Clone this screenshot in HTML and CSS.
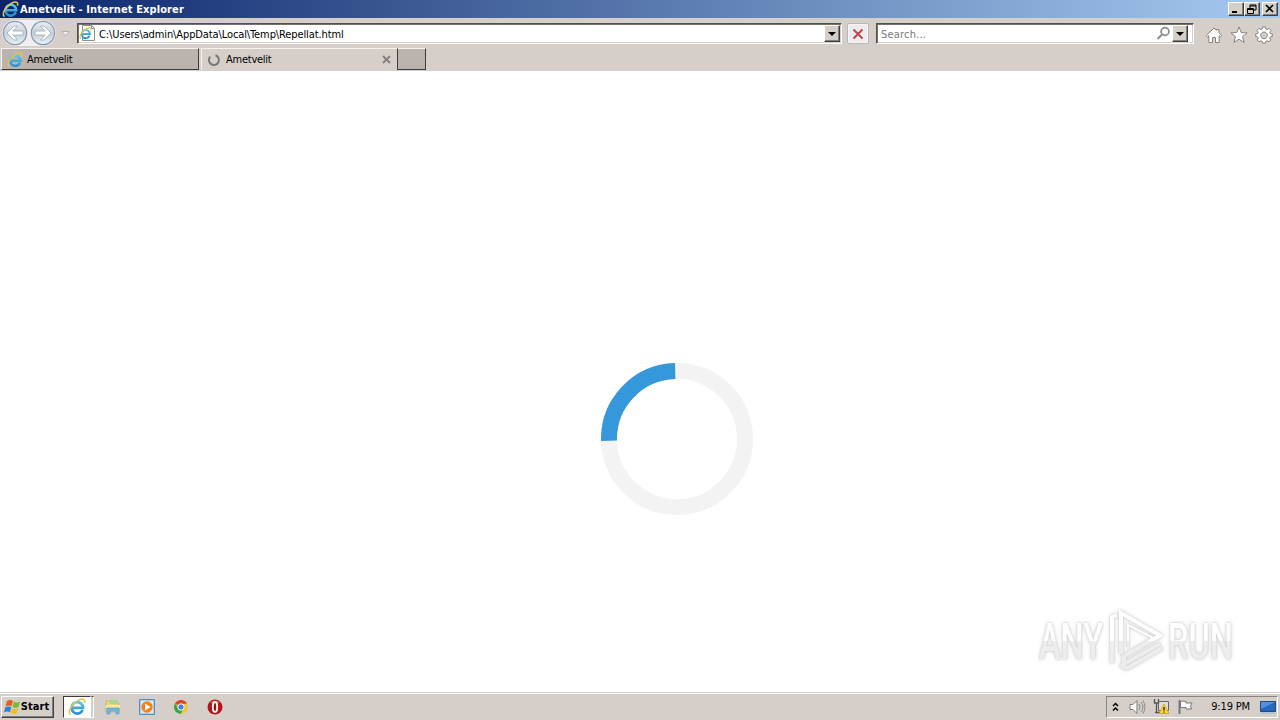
FILE: index.html
```html
<!DOCTYPE html>
<html lang="en">
<head>
  <meta charset="UTF-8" />
  <title>Ametvelit - Internet Explorer</title>
  <link rel="stylesheet" href="styles.css">
</head>
<body>
  <!-- shared icon shapes -->
  <svg class="defs" width="0" height="0">
    <defs>
      <linearGradient id="ie-blue" x1="0" y1="0" x2="0" y2="1">
        <stop offset="0" stop-color="#56c5ef" /><stop offset="1" stop-color="#2e8ed0" />
      </linearGradient>
      <linearGradient id="round" x1="0" y1="0" x2="0" y2="1">
        <stop offset="0" stop-color="#eef0f3" /><stop offset=".5" stop-color="#c5ced8" /><stop offset="1" stop-color="#e7f3fa" />
      </linearGradient>
      <symbol id="ie" viewBox="0 0 16 16">
        <path d="M13 10.7A5.1 5.1 0 1 1 13.4 8.7H4.3" fill="none" stroke="url(#ie-blue)" stroke-width="2.4" />
        <path d="M2.4 14.7C-.8 12.6 3.1 5.2 9 2.1C12.5.2 15.8.7 14.5 4.4" fill="none" stroke="#e9c545" stroke-width="1.4" />
      </symbol>
    </defs>
  </svg>

  <header class="titlebar">
    <svg class="ie-icon" width="17" height="17"><use href="#ie" /></svg>
    <h1>Ametvelit - Internet Explorer</h1>
    <div class="window-buttons">
      <button><svg width="12" height="10"><path d="M2 8h5" stroke="#000" stroke-width="2" /></svg></button>
      <button><svg width="12" height="10"><path d="M4 4V1h6v5H8M4 2h6M1.5 4.5h6v5h-6zM1 5.5h7" fill="none" stroke="#000" /></svg></button>
      <button class="close"><svg width="12" height="10"><path d="M2 1l7 7M9 1L2 8" stroke="#000" stroke-width="1.7" /></svg></button>
    </div>
  </header>

  <nav class="navbar">
    <svg class="history" width="74" height="28" viewBox="0 0 74 28">
      <path d="M15 1H43a13 13 0 0 1 0 26H15a13 13 0 0 1 0-26z" fill="#f0efef" />
      <circle cx="15" cy="14" r="11.7" fill="url(#round)" stroke="#8799aa" stroke-width="1.2" />
      <circle cx="43" cy="14" r="11.7" fill="url(#round)" stroke="#8799aa" stroke-width="1.2" />
      <g fill="#fff" stroke="#9eabb9" stroke-width=".8">
        <path d="M7 14l7-7h3.500l-4.700 5H23v4H12.800l4.700 5H14z" />
        <path d="M51 14l-7-7h-3.500l4.700 5H35v4h10.200l-4.700 5H44z" />
      </g>
      <path d="M61.500 12.500h8l-4 4z" fill="#eee" stroke="#b4aea8" />
    </svg>
    <div class="field address">
      <svg width="17" height="17" viewBox="0 0 17 17">
        <path d="M3.500.5h9l3 3v12h-12z" fill="#fff" stroke="#8e8e8e" /><path d="M12.500.5v3h3" fill="none" stroke="#8e8e8e" />
        <use href="#ie" x="0" y="2" width="13" height="13" />
      </svg>
      <span class="url">C:\Users\admin\AppData\Local\Temp\Repellat.html</span>
      <button class="drop"><svg width="8" height="4"><path d="M0 0h8L4 4z" /></svg></button>
    </div>
    <button class="stop"><svg width="12" height="12"><path d="M1.500 1.500l9 9M10.500 1.500l-9 9" stroke="#b9474b" stroke-width="2" /></svg></button>
    <div class="field search">
      <span class="hint">Search...</span>
      <svg width="15" height="15" viewBox="0 0 15 15"><circle cx="9" cy="5.500" r="3.900" fill="none" stroke="#8b8b8b" stroke-width="1.700" /><path d="M6.300 8.300L1.500 13" stroke="#8b8b8b" stroke-width="2" /></svg>
      <button class="drop"><svg width="8" height="4"><path d="M0 0h8L4 4z" /></svg></button>
    </div>
    <div class="tools">
      <svg width="18" height="18" viewBox="0 0 18 18"><path d="M9 2l2.500 2.400V3.500h2.500v3.300l2.800 2.800-1.300 1.200-1.300-1.200V16.500h-3.700v-5h-3v5H3.800V9.600l-1.300 1.200-1.300-1.200z" /></svg>
      <svg width="18" height="18" viewBox="0 0 18 18"><path d="M9 1l2.200 5.500 5.900.4-4.600 3.700 1.600 5.900L9 13.200l-5.100 3.300 1.600-5.900L.9 6.900l5.900-.4z" /></svg>
      <svg width="18" height="18" viewBox="0 0 18 18"><path fill-rule="evenodd" d="M7.500 1h3l.4 2.100 1.300.5L14 2.400 16 4.500l-1.300 1.800.5 1.200 2.100.4v2.700l-2.100.4-.5 1.300L16 14l-2 2-1.800-1.200-1.300.5-.4 2h-3l-.4-2-1.300-.5L4 16l-2-2 1.300-1.700-.5-1.300-2.100-.4V7.900l2.100-.4.5-1.200L2 4.500 4 2.400l1.800 1.200 1.300-.5zM9 6a3.300 3.300 0 1 0 .01 0z" /></svg>
    </div>
  </nav>

  <div class="tabs">
    <div class="tab">
      <svg width="16" height="16"><use href="#ie" /></svg>
      <span>Ametvelit</span>
    </div>
    <div class="tab active">
      <svg width="16" height="16" viewBox="0 0 16 16"><path d="M9.500 3.300A5 5 0 1 1 4.200 4.700" fill="none" stroke="#777" stroke-width="2" /></svg>
      <span>Ametvelit</span>
      <svg class="tab-close" width="9" height="9"><path d="M1 1l7 7M8 1L1 8" stroke="#858080" stroke-width="2" /></svg>
    </div>
    <div class="tab new"></div>
  </div>

  <main class="page">
    <svg class="loader" width="153" height="152" viewBox="0 0 153 152">
      <circle cx="76" cy="76" r="68" fill="none" stroke="#f3f3f3" stroke-width="16" />
      <path d="M8.020 77.780A68 68 0 0 1 74.220 8.020" fill="none" stroke="#3498db" stroke-width="16" />
    </svg>
    <svg class="watermark" width="210" height="76" viewBox="0 0 210 76">
      <defs>
        <linearGradient id="mark" gradientUnits="userSpaceOnUse" x1="0" y1="0" x2="0" y2="76">
          <stop offset=".48" stop-color="#fff" /><stop offset=".48" stop-color="#ededed" />
        </linearGradient>
      </defs>
      <g class="wordmark" fill="url(#mark)">
        <text x="9" y="54" textLength="64" lengthAdjust="spacingAndGlyphs">ANY</text>
        <text x="138" y="54" textLength="65" lengthAdjust="spacingAndGlyphs">RUN</text>
      </g>
      <g class="play" fill="none" stroke="url(#mark)" stroke-width="4">
        <path d="M82 58V12l5-2" />
        <path d="M91 49V8l39 22.500-36 20.500v8l36-20" />
        <path d="M98 43V20l27 14" stroke-width="2" />
        <path d="M90 60l7 3 35-20" />
      </g>
    </svg>
  </main>

  <footer class="taskbar">
    <button class="start">
      <svg width="17" height="16" viewBox="0 0 17 16">
        <path d="M3 2q3-2 6 0L7.500 7.300q-3-1.700-6 0z" fill="#e65b24" /><path d="M10 2.500q3 1.800 6 0L14.500 8q-3 1.600-6 0z" fill="#75b936" />
        <path d="M1.300 8.300q3-1.700 6 0L6 13.300q-3-1.700-6 0z" fill="#2786d0" /><path d="M8.200 9q3 1.700 6 0L13 14q-3 1.800-6 0z" fill="#f5bd25" />
      </svg>
      Start
    </button>
    <div class="running"><svg width="18" height="18"><use href="#ie" /></svg></div>
    <div class="stack"></div>
    <div class="pinned">
      <svg width="16" height="16" viewBox="0 0 16 16"><path d="M1 2h5l1 2h7v9H1z" fill="#ecd57a" stroke="#c9ad55" stroke-width=".7" /><path d="M5 1h8v4H5z" fill="#a8d590" /><path d="M1 6h14v3H1z" fill="#f6e8a8" /><path d="M2 15V9h12v6h-3v-3H5v3z" fill="#71b9df" stroke="#4a98c4" stroke-width=".6" /></svg>
      <svg width="16" height="16" viewBox="0 0 16 16"><path d="M.5.5h15v15H.5z" fill="#a9cfea" stroke="#4d8fbd" /><path d="M2 2h12v12H2z" fill="#d8e9f4" /><circle cx="8" cy="8" r="5.700" fill="#ef8518" /><path d="M6 4.500v7L11.500 8z" fill="#fff" /></svg>
      <svg width="16" height="16" viewBox="0 0 16 16"><circle cx="8" cy="8" r="7" fill="#f4c52c" /><path d="M8 8L2 4.400A7 7 0 0 1 14 4.500L8 5z" fill="#df4132" /><path d="M2 4.400A7 7 0 0 0 7.500 15l3.200-5.500L8 8 5.500 9.400z" fill="#36a453" /><circle cx="8" cy="8" r="3.200" fill="#3d83df" stroke="#fff" /></svg>
      <svg width="16" height="16" viewBox="0 0 16 16"><circle cx="8" cy="8" r="7.500" fill="#b91116" /><path d="M3 3.500a7 7 0 0 1 10 0Q8 6 3 3.500z" fill="#db5550" /><ellipse cx="8" cy="8" rx="2.200" ry="5" fill="#a01014" stroke="#fff" stroke-width="1.900" /></svg>
    </div>
    <div class="tray">
      <svg width="7" height="10" viewBox="0 0 7 10"><path d="M1 4l2.500-2.500L6 4M1 8.500L3.500 6 6 8.500" fill="none" stroke="#000" stroke-width="1.500" /></svg>
      <svg class="volume" width="17" height="16" viewBox="0 0 17 16"><path d="M1 5.500h3l4-4v13l-4-4H1z" fill="#fff" stroke="#777" /><path d="M10 5q2 3 0 6M12 3q4 5 0 10M14 1.500q4 6.500 0 13" fill="none" stroke="#888" /></svg>
      <svg class="network" width="17" height="17" viewBox="0 0 17 17"><path d="M5.500 3.500h10v9h-10z" fill="#ddd" stroke="#666" /><path d="M1.500 1v4h4V1M3.500 5v9M2 14.500h5" fill="none" stroke="#555" stroke-width="1.300" /><path d="M11 6l5 9.500H6z" fill="#ffd52c" stroke="#c79b0b" stroke-width=".7" /><path d="M11 9v3.500M11 13.400v1.200" stroke="#222" stroke-width="1.300" /></svg>
      <svg class="flag" width="17" height="16" viewBox="0 0 17 16"><path d="M2.500 1v14" stroke="#777" stroke-width="2" /><path d="M3.500 2.500q3-1 5.500 0v1.500h6l-1.500 3 1 3H9V8.500H3.500z" fill="#fff" stroke="#777" /></svg>
      <time>9:19 PM</time>
      <svg width="16" height="14" viewBox="0 0 16 14"><path d="M.5 1.500h15v10H.5z" fill="#2368bd" stroke="#234b78" /><path d="M1 2h14L1 9z" fill="#4e91dd" /><path d="M1 13h14" stroke="#a9bdd1" stroke-width="1.500" /></svg>
    </div>
  </footer>
</body>
</html>
```
FILE: styles.css
```css
* {
  box-sizing: border-box;
}

body {
  margin: 0;
  height: 100vh;
  display: flex;
  flex-direction: column;
  overflow: hidden;
  background: #fff;
  color: #000;
  font-family: "DejaVu Sans Condensed", "DejaVu Sans", sans-serif;
  font-stretch: condensed;
  font-size: 11px;
}

svg {
  display: block;
  flex: none;
}

.defs {
  position: absolute;
}

button {
  display: flex;
  align-items: center;
  justify-content: center;
  padding: 0;
  font: inherit;
  color: #000;
  background: #d4d0c8;
  border: 1px solid;
  border-color: #fff #404040 #404040 #fff;
  box-shadow: inset -1px -1px #808080;
}

.titlebar {
  flex: none;
  height: 18px;
  display: flex;
  align-items: center;
  padding: 0 2px;
  background: linear-gradient(90deg, #0a246a, #a6caf0);
}

.titlebar h1 {
  flex: 1;
  margin: 1px 0 0 1px;
  color: #fff;
  font-size: 11px;
  line-height: 18px;
  letter-spacing: 0.1px;
}

.window-buttons {
  display: flex;
}

.window-buttons button {
  width: 16px;
  height: 14px;
}

.window-buttons .close {
  margin-left: 2px;
}

.navbar {
  flex: none;
  height: 30px;
  display: flex;
  align-items: flex-start;
  padding-top: 5px;
  background: #d6cfc9;
}

.history {
  margin-top: -4px;
}

.field {
  height: 21px;
  display: flex;
  align-items: center;
  background: #fff;
  border: 1px solid;
  border-color: #55504b #fff #fff #55504b;
  box-shadow: inset 1px 1px #77716c, inset -1px -1px #d6cfc9;
}

.address {
  width: 765px;
  margin-left: 3px;
  padding: 0 1px;
}

.url {
  flex: 1;
  margin: 1px 0 0 3px;
  letter-spacing: -0.11px;
}

.drop {
  width: 16px;
  height: 17px;
}

.stop {
  width: 22px;
  height: 21px;
  margin: 0 7px 0 5px;
  background: #eeebed;
  border-color: #bcb6b5;
  border-radius: 2px;
  box-shadow: inset 0 0 0 1px #f9f6f8;
}

.search {
  width: 318px;
  padding: 0 5px 0 4px;
}

.hint {
  flex: 1;
  margin-top: 1px;
  color: #777;
  letter-spacing: 0.2px;
}

.search svg {
  margin-right: 1px;
}

.search .drop svg {
  margin: 0;
}

.tools {
  display: flex;
  gap: 7px;
  margin: 3px 0 0 11px;
}

.tools path {
  fill: #fff;
  stroke: #88837f;
  stroke-width: 1;
}

.tabs {
  flex: none;
  height: 23px;
  display: flex;
  align-items: stretch;
  padding: 0 0 1px 1px;
  background: #d6cfc9;
}

.tab {
  width: 198px;
  display: flex;
  align-items: center;
  padding: 1px 5px 0;
  background: #bbb3ad;
  border: 1px solid;
  border-color: #f5f2f0 #403b38 #403b38 #f5f2f0;
}

.tab span {
  margin-left: 4px;
  letter-spacing: -0.25px;
}

.tab.active {
  width: 196px;
  margin-left: 2px;
  padding: 1px 4px 0;
  background: #d6cfc9;
  border-color: #f5f2f0 transparent transparent #f5f2f0;
}

.tab-close {
  margin-left: auto;
  margin-right: 1px;
}

.tab.new {
  width: 29px;
  border-color: #f5f2f0 #403b38 #403b38 #403b38;
}

.page {
  position: relative;
  flex: 1;
  display: flex;
  justify-content: center;
  align-items: flex-start;
  padding: 292px 0 0 75px;
}

.watermark {
  position: absolute;
  left: 1030px;
  top: 534px;
  overflow: visible;
}

.wordmark {
  font-family: Roboto, sans-serif;
  font-size: 50px;
  font-stretch: normal;
  font-weight: 500;
  filter: drop-shadow(0 0 1px #c4c4c4) drop-shadow(0 0 2px #e4e4e4);
}

.play {
  filter: drop-shadow(0 0 1px #c4c4c4) drop-shadow(0 0 2px #e4e4e4);
}

.taskbar {
  flex: none;
  height: 28px;
  display: flex;
  align-items: center;
  padding: 2px 2px 2px 1px;
  border-top: 1px solid #d6cfc9;
  background: #d6cfc9;
  box-shadow: inset 0 1px #fff;
}

.start {
  width: 53px;
  height: 22px;
  padding-right: 2px;
  font-weight: bold;
  letter-spacing: 0.1px;
}

.running {
  width: 28px;
  height: 22px;
  margin-left: 9px;
  display: flex;
  align-items: center;
  justify-content: center;
  background: #fff;
  border: 1px solid;
  border-color: #403b38 #fff #fff #403b38;
}

.stack {
  width: 3px;
  height: 22px;
  border: 1px solid;
  border-color: #403b38 #fff #fff #d6cfc9;
}

.pinned {
  display: flex;
  gap: 18px;
  margin-left: 11px;
}

.tray {
  height: 22px;
  width: 172px;
  margin-left: auto;
  display: flex;
  align-items: center;
  padding: 0 1px 0 5px;
  border: 1px solid;
  border-color: #8b8580 #fff #fff #8b8580;
}

.volume {
  margin-left: 10px;
}

.network,
.flag {
  margin-left: 7px;
}

.tray time {
  margin: 0 10px 0 auto;
  letter-spacing: -0.15px;
  white-space: nowrap;
}
```
